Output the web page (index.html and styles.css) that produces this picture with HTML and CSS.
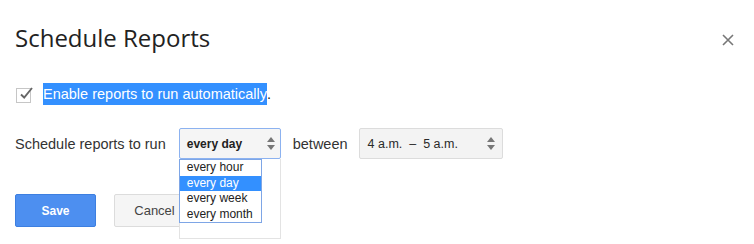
FILE: index.html
```html
<!DOCTYPE html>
<html>
<head>
<meta charset="utf-8">
<link rel="stylesheet" href="styles.css">
</head>
<body>
<div class="dialog">
  <div class="header">
    <h1 class="title">Schedule Reports</h1>
    <svg class="close" width="12" height="12" viewBox="0 0 12 12"><path d="M1 1L11 11M11 1L1 11" stroke="#777" stroke-width="1.6" fill="none"/></svg>
  </div>
  <div class="check-row">
    <span class="checkbox"><svg class="tick" width="15" height="15" viewBox="0 0 15 15"><path d="M3 8.5L6.2 11.5L14 2" stroke="#666" stroke-width="1.9" fill="none"/></svg></span>
    <span class="check-label"><span class="selected">Enable reports to run automatically</span>.</span>
  </div>
  <div class="schedule-row">
    <span class="label">Schedule reports to run</span>
    <div class="select-wrap">
      <div class="select select-focused">
        <span class="select-text bold">every day</span>
        <span class="arrows"><i class="up"></i><i class="down"></i></span>
      </div>
      <div class="popup">
        <ul class="list">
          <li>every hour</li>
          <li class="active">every day</li>
          <li>every week</li>
          <li>every month</li>
        </ul>
      </div>
    </div>
    <span class="label between">between</span>
    <div class="select select-wide">
      <span class="select-text wide-text">4 a.m. &nbsp;–&nbsp; 5 a.m.</span>
      <span class="arrows"><i class="up"></i><i class="down"></i></span>
    </div>
  </div>
  <div class="actions">
    <button class="btn btn-save">Save</button>
    <button class="btn btn-cancel">Cancel</button>
  </div>
</div>
</body>
</html>
```
FILE: styles.css
```css
html, body {
  margin: 0;
  padding: 0;
  background: #fff;
}
body {
  font-family: "Liberation Sans", Arial, sans-serif;
  color: #333;
  width: 754px;
  height: 244px;
  overflow: hidden;
}
.dialog {
  padding: 0 20px 0 15px;
}
.header {
  display: flex;
  justify-content: space-between;
  align-items: center;
  padding-top: 22px;
}
.title {
  margin: 0;
  font-family: "Open Sans", sans-serif;
  font-weight: 400;
  font-size: 24px;
  line-height: 32px;
  color: #222;
  letter-spacing: 0;
}
.close {
  display: block;
  margin-top: 4px;
}
.check-row {
  display: flex;
  align-items: center;
  margin-top: 29px;
  height: 22px;
}
.checkbox {
  position: relative;
  width: 13px;
  height: 13px;
  border: 1px solid #c6c6c6;
  margin-left: 1px;
  margin-right: 12px;
  margin-top: 2px;
  background: #fff;
}
.tick {
  position: absolute;
  left: 1px;
  top: -3px;
  overflow: visible;
}
.check-label {
  font-size: 14.5px;
  line-height: 22px;
  color: #222;
}
.selected {
  background: #3390ff;
  color: #fff;
  display: inline-block;
  line-height: 22px;
}
.schedule-row {
  display: flex;
  align-items: center;
  margin-top: 23px;
  height: 31px;
}
.label {
  font-size: 14.5px;
  color: #333;
}
.select-wrap {
  position: relative;
  margin-left: 13px;
}
.select {
  box-sizing: border-box;
  height: 31px;
  width: 102px;
  border: 1px solid #dcdcdc;
  border-radius: 2px;
  background: #f3f3f3;
  display: flex;
  align-items: center;
  justify-content: space-between;
  padding: 0 4px 0 7px;
}
.select-focused {
  border-color: #8cb2f0;
  background: #f5f5f5;
}
.select-wide {
  width: 144px;
  margin-left: 11px;
  padding-left: 8px;
  padding-right: 6px;
}
.between {
  margin-left: 12px;
}
.select-text {
  font-size: 12px;
  color: #333;
  white-space: nowrap;
}
.wide-text {
  font-size: 12.5px;
  color: #2a2a2a;
}
.bold {
  font-weight: bold;
  color: #222;
}
.arrows {
  display: flex;
  flex-direction: column;
  gap: 3px;
  width: 9px;
  align-items: center;
}
.arrows i {
  display: block;
  width: 0;
  height: 0;
  border-left: 4px solid transparent;
  border-right: 4px solid transparent;
}
.arrows .up {
  border-bottom: 5px solid #777;
}
.arrows .down {
  border-top: 5px solid #777;
}
.popup {
  position: absolute;
  top: 31px;
  left: 0;
  box-sizing: border-box;
  width: 102px;
  height: 80px;
  background: #fff;
  border: 1px solid #e3e3e3;
  border-top: none;
  z-index: 2;
}
.list {
  list-style: none;
  margin: 0;
  padding: 0;
  box-sizing: border-box;
  width: 83px;
  margin-left: -1px;
  margin-top: 0;
  border: 1px solid #7ea6e6;
  background: #fff;
}
.list li {
  font-size: 12px;
  line-height: 15.5px;
  padding-left: 7px;
  color: #222;
}
.list li.active {
  background: #3390ff;
  color: #fff;
}
.actions {
  display: flex;
  gap: 18px;
  margin-top: 35px;
}
.btn {
  box-sizing: border-box;
  height: 33px;
  border-radius: 2px;
  font-family: "Liberation Sans", Arial, sans-serif;
  padding: 0;
}
.btn-save {
  width: 81px;
  background: #4d8ff0;
  border: 1px solid #3d7fe0;
  color: #fff;
  font-weight: bold;
  font-size: 12px;
}
.btn-cancel {
  width: 81px;
  background: #f5f5f5;
  border: 1px solid #dcdcdc;
  color: #444;
  font-size: 13px;
}
```
